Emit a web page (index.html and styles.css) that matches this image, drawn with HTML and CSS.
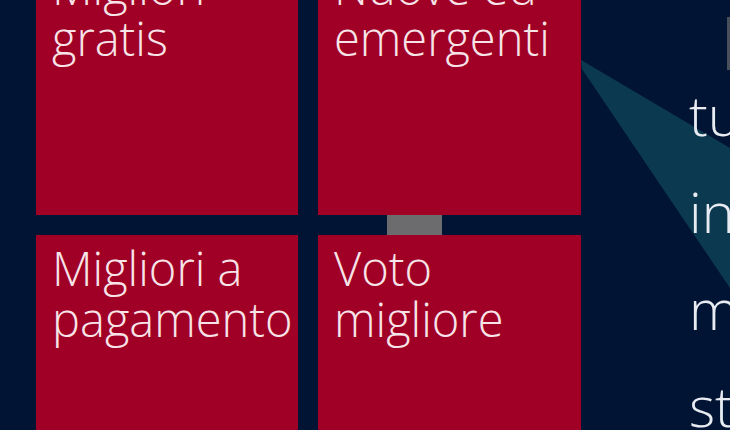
FILE: index.html
```html
<!DOCTYPE html>
<html lang="it">
  <head>
    <meta charset="UTF-8" />
    <meta name="viewport" content="width=device-width, initial-scale=1.0" />
    <title>Store</title>
    <link rel="stylesheet" href="styles.css">
  </head>
  <body>
    <main class="store">
      <!-- Category tiles -->
      <section class="tiles">
        <a class="tile" href="#">Migliori<br />gratis</a>
        <a class="tile" href="#">Nuove ed<br />emergenti</a>
        <a class="tile" href="#">Migliori a<br />pagamento</a>
        <a class="tile" href="#">Voto<br />migliore</a>
        <span class="scroll-thumb"></span>
      </section>

      <!-- Promo panel -->
      <section class="promo">
        <svg class="beam" width="149" height="430" viewBox="0 0 149 430">
          <polygon points="0,60 149,148 149,288 1,69" fill="#0b3a50" />
        </svg>
        <div class="promo-text">
          <div class="promo-title">Scopri</div>
          <div class="promo-line">tutte</div>
          <div class="promo-line">in</div>
          <div class="promo-line">modo</div>
          <div class="promo-line">store</div>
        </div>
        <span class="caret"></span>
      </section>
    </main>
  </body>
</html>
```

FILE: styles.css
```css
html,
body {
  margin: 0;
  padding: 0;
  width: 100%;
  height: 100%;
  background: #021433;
  overflow: hidden;
}

.store {
  display: flex;
  width: 730px;
  height: 430px;
  overflow: hidden;
}

/* Tiles */
.tiles {
  position: relative;
  display: grid;
  grid-template-columns: 262px 263px;
  grid-template-rows: 261px 261px;
  gap: 20px;
  margin-top: -46px;
  padding-left: 36px;
  flex-shrink: 0;
}

.tiles .tile {
  display: block;
  box-sizing: border-box;
  padding: 8px 10px 0 16px;
  background: #a10026;
  font-family: "Open Sans", "Noto Sans", sans-serif;
  font-weight: 300;
  font-size: 47px;
  line-height: 51px;
  color: #f7e4e8;
  text-decoration: none;
  white-space: nowrap;
}

.tiles .scroll-thumb {
  position: absolute;
  left: 387px;
  top: 261px;
  width: 55px;
  height: 20px;
  background: #6c6c6e;
}

/* Promo panel */
.promo {
  position: relative;
  flex: 1;
  overflow: hidden;
}

.promo .beam {
  position: absolute;
  top: 0;
  left: 0;
}

.promo .promo-text {
  position: relative;
  margin-top: -71px;
  padding-left: 108px;
  font-family: "Open Sans", "Noto Sans", sans-serif;
  font-weight: 300;
  font-size: 56px;
  line-height: 97px;
  color: #e8ecf2;
  white-space: nowrap;
}

.promo .promo-title {
  margin-bottom: 40px;
}

.promo .caret {
  position: absolute;
  left: 146px;
  top: 17px;
  width: 3px;
  height: 53px;
  background: #4a4f5c;
}
```
